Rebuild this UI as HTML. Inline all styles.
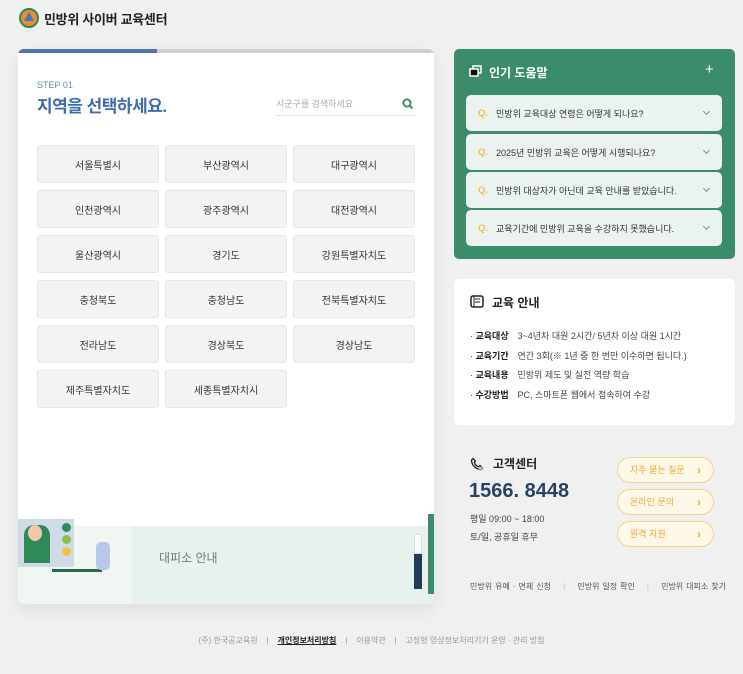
<!DOCTYPE html>
<html><head><meta charset="utf-8"><style>
*{margin:0;padding:0;box-sizing:border-box}
body{width:743px;height:674px;background:#f0f0f0;font-family:"Liberation Sans","Noto Sans CJK KR",sans-serif;position:relative;overflow:hidden;color:#222}
.abs{position:absolute}
.logo{left:19px;top:8px;display:flex;align-items:center;font-size:13px;font-weight:bold;letter-spacing:-0.3px}
.card{left:18px;top:49px;width:416px;height:555px;background:#fff;border-radius:6px;box-shadow:0 6px 16px rgba(0,0,0,.07);overflow:hidden}
.bar{left:0;top:0;width:416px;height:4px;background:#cfcfcf}
.bar i{display:block;width:139px;height:4px;background:#4a77b4}
.btn{position:absolute;width:122px;height:38px;background:#f3f3f3;border:1px solid #e6e6e6;border-radius:3px;font-size:10px;color:#333;display:flex;align-items:center;justify-content:center}
.green{left:454px;top:49px;width:281px;height:210px;background:#3a8c6b;border-radius:5px}
.q{position:absolute;left:12px;width:256px;height:36px;background:#ebf3f0;border-radius:5px;font-size:9px;color:#333;display:flex;align-items:center;padding-left:12px}
.q b{color:#f5c04a;margin-right:8px;font-size:9.5px}
.q .c{position:absolute;right:13px;top:14px;width:5px;height:5px;border-right:1px solid #6aa08a;border-bottom:1px solid #6aa08a;transform:rotate(45deg)}
.info{left:454px;top:279px;width:281px;height:146px;background:#fff;border-radius:5px}
.li{position:absolute;left:16px;font-size:9px;color:#444}
.li b{color:#222;display:inline-block;width:42px}
.pill{position:absolute;left:617px;width:97px;height:26px;border:1px solid #f6d08a;background:#fff8e8;border-radius:13px;font-size:9px;color:#f0a830;padding-left:12px;line-height:24px}
.pill:after{content:"›";position:absolute;right:12px;top:0;font-weight:bold;font-size:12px}
</style></head><body>
<div class="abs logo"><svg width="20" height="20" viewBox="0 0 20 20"><circle cx="10" cy="10" r="9" fill="#f08a2a" stroke="#2a8a5a" stroke-width="2"/><polygon points="10,4 15,13 5,13" fill="#3a7ac8"/></svg><span style="margin-left:5px">민방위 사이버 교육센터</span></div>

<div class="abs card">
<div class="abs bar"><i></i></div>
<div class="abs" style="left:19px;top:31px;font-size:9px;color:#6a8ab8">STEP 01</div>
<div class="abs" style="left:19px;top:43px;font-size:17px;font-weight:bold;color:#3f6eac;letter-spacing:-0.5px">지역을 선택하세요.</div>
<div class="abs" style="left:258px;top:48px;font-size:9px;color:#aaa">시군구를 검색하세요</div>
<svg class="abs" style="left:384px;top:49px" width="12" height="12" viewBox="0 0 12 12"><circle cx="5" cy="5" r="3.6" fill="none" stroke="#2a8a5a" stroke-width="1.8"/><line x1="7.6" y1="7.6" x2="10.5" y2="10.5" stroke="#2a8a5a" stroke-width="1.8"/></svg>
<div class="abs" style="left:258px;top:66px;width:140px;height:1px;background:#e3e3e3"></div>
<div class="btn" style="left:19px;top:96px">서울특별시</div>
<div class="btn" style="left:147px;top:96px">부산광역시</div>
<div class="btn" style="left:275px;top:96px">대구광역시</div>
<div class="btn" style="left:19px;top:141px">인천광역시</div>
<div class="btn" style="left:147px;top:141px">광주광역시</div>
<div class="btn" style="left:275px;top:141px">대전광역시</div>
<div class="btn" style="left:19px;top:186px">울산광역시</div>
<div class="btn" style="left:147px;top:186px">경기도</div>
<div class="btn" style="left:275px;top:186px">강원특별자치도</div>
<div class="btn" style="left:19px;top:231px">충청북도</div>
<div class="btn" style="left:147px;top:231px">충청남도</div>
<div class="btn" style="left:275px;top:231px">전북특별자치도</div>
<div class="btn" style="left:19px;top:276px">전라남도</div>
<div class="btn" style="left:147px;top:276px">경상북도</div>
<div class="btn" style="left:275px;top:276px">경상남도</div>
<div class="btn" style="left:19px;top:321px">제주특별자치도</div>
<div class="btn" style="left:147px;top:321px">세종특별자치시</div>
<div class="abs" style="left:0;top:477px;width:416px;height:78px;background:#e7f1ed"></div>
<div class="abs" style="left:0;top:477px;width:114px;height:78px;background:#f1f6f3"></div>
<div class="abs" style="left:0;top:470px;width:56px;height:48px;background:#cfdbe6"></div>
<div class="abs" style="left:6px;top:476px;width:26px;height:38px;background:#2f8a5a;border-radius:10px 10px 0 0"></div>
<div class="abs" style="left:10px;top:476px;width:14px;height:16px;background:#f3c8a8;border-radius:50%"></div>
<div class="abs" style="left:34px;top:520px;width:50px;height:3px;background:#2a6a4a"></div>
<div class="abs" style="left:78px;top:493px;width:14px;height:28px;background:#b8c8e8;border-radius:5px"></div>
<div class="abs" style="left:44px;top:474px;width:9px;height:9px;border-radius:50%;background:#2f8a5a"></div>
<div class="abs" style="left:44px;top:486px;width:9px;height:9px;border-radius:50%;background:#8cc04a"></div>
<div class="abs" style="left:44px;top:498px;width:9px;height:9px;border-radius:50%;background:#f5c04a"></div>
<div class="abs" style="left:141px;top:500px;font-size:12px;color:#777">대피소 안내</div>
<div class="abs" style="left:410px;top:465px;width:6px;height:80px;background:#3a8c6b"></div>
<div class="abs" style="left:396px;top:495px;width:8px;height:45px;background:#1f3a5a"></div>
<div class="abs" style="left:396px;top:485px;width:8px;height:20px;background:#fff;border:1px solid #ddd"></div>
</div>

<div class="abs green">
<svg class="abs" style="left:15px;top:16px" width="14" height="13" viewBox="0 0 14 13"><rect x="4" y="1" width="8" height="7" fill="none" stroke="#fff" stroke-width="1.5"/><rect x="1" y="4" width="8" height="7" fill="#111" stroke="#fff" stroke-width="1.5"/></svg>
<div class="abs" style="left:35px;top:15px;font-size:12px;font-weight:bold;color:#fff">인기 도움말</div>
<div class="abs" style="left:251px;top:12px;font-size:15px;color:#fff">+</div>
<div class="q" style="top:46px"><b>Q.</b>민방위 교육대상 연령은 어떻게 되나요?<i class="c"></i></div>
<div class="q" style="top:85px"><b>Q.</b>2025년 민방위 교육은 어떻게 시행되나요?<i class="c"></i></div>
<div class="q" style="top:123px"><b>Q.</b>민방위 대상자가 아닌데 교육 안내를 받았습니다.<i class="c"></i></div>
<div class="q" style="top:161px"><b>Q.</b>교육기간에 민방위 교육을 수강하지 못했습니다.<i class="c"></i></div>
</div>

<div class="abs info">
<svg class="abs" style="left:16px;top:16px" width="14" height="13" viewBox="0 0 14 13"><rect x="1" y="1" width="12" height="11" rx="2" fill="none" stroke="#222" stroke-width="1.5"/><line x1="5" y1="4" x2="10" y2="4" stroke="#222"/><line x1="5" y1="7" x2="10" y2="7" stroke="#222"/><line x1="4" y1="1" x2="4" y2="12" stroke="#222"/></svg>
<div class="abs" style="left:38px;top:15px;font-size:12px;font-weight:bold">교육 안내</div>
<div class="li" style="top:50px">· <b>교육대상</b>3~4년차 대원 2시간/ 5년차 이상 대원 1시간</div>
<div class="li" style="top:70px">· <b>교육기간</b>연간 3회(※ 1년 중 한 번만 이수하면 됩니다.)</div>
<div class="li" style="top:89px">· <b>교육내용</b>민방위 제도 및 실전 역량 학습</div>
<div class="li" style="top:109px">· <b>수강방법</b>PC, 스마트폰 웹에서 접속하여 수강</div>
</div>

<svg class="abs" style="left:470px;top:457px" width="14" height="14" viewBox="0 0 14 14"><path d="M3 1.5 L5.5 4 L4.3 5.5 C5 7.5 6.5 9 8.5 9.7 L10 8.5 L12.5 11 L11 12.5 C6 12.5 1.5 8 1.5 3 Z" fill="none" stroke="#222" stroke-width="1.3"/><circle cx="11" cy="12" r="2.5" fill="#a8d0bc" opacity=".7"/></svg>
<div class="abs" style="left:493px;top:455px;font-size:12px;font-weight:bold">고객센터</div>
<div class="abs" style="left:469px;top:480px;font-size:20px;font-weight:bold;color:#2a4262">1566. 8448</div>
<div class="abs" style="left:470px;top:512px;font-size:9px;color:#444">평일 09:00 ~ 18:00</div>
<div class="abs" style="left:470px;top:530px;font-size:9px;color:#444">토/일, 공휴일 휴무</div>
<div class="pill" style="top:457px">자주 묻는 질문</div>
<div class="pill" style="top:489px">온라인 문의</div>
<div class="pill" style="top:521px">원격 지원</div>
<div class="abs" style="left:470px;top:581px;font-size:8px;color:#555;white-space:nowrap;word-spacing:0.8px">민방위 유예 · 면제 신청 &nbsp;&nbsp;&nbsp;<span style="color:#bbb">|</span>&nbsp;&nbsp;&nbsp; 민방위 일정 확인 &nbsp;&nbsp;&nbsp;<span style="color:#bbb">|</span>&nbsp;&nbsp;&nbsp; 민방위 대피소 찾기</div>

<div class="abs" style="left:0;top:635px;width:743px;text-align:center;font-size:8px;color:#999">(주) 한국공교육원 &nbsp;&nbsp; | &nbsp;&nbsp; <b style="color:#222;text-decoration:underline">개인정보처리방침</b> &nbsp;&nbsp; | &nbsp;&nbsp; 이용약관 &nbsp;&nbsp; | &nbsp;&nbsp; 고정형 영상정보처리기기 운영 · 관리 방침</div>
</body></html>
